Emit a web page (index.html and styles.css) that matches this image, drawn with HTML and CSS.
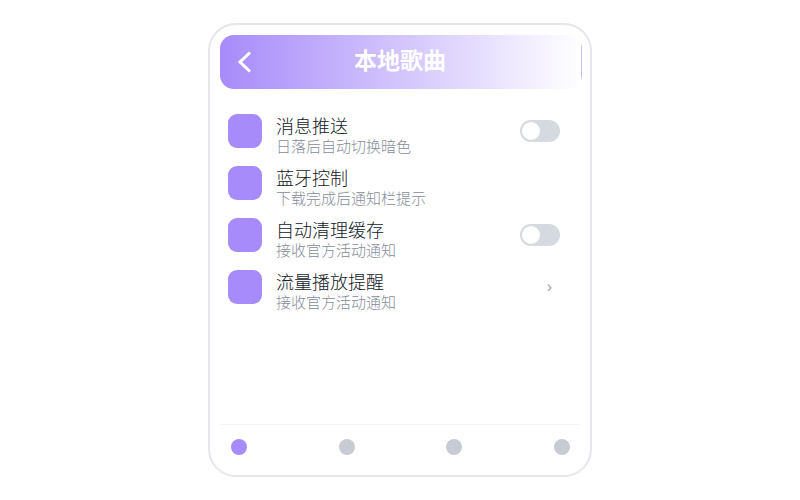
FILE: index.html
```html
<!DOCTYPE html>
<html lang="zh-CN">
  <head>
    <meta charset="utf-8" />
    <title>本地歌曲</title>
    <link rel="stylesheet" href="styles.css">
  </head>
  <body>
    <main class="phone">
      <header class="header">
        <button class="back" type="button" aria-label="返回">
          <svg viewBox="0 0 24 24" width="24" height="24">
            <path d="M18 2.5 L8 12 L18 21.5" />
          </svg>
        </button>
        <h1 class="title">本地歌曲</h1>
      </header>

      <ul class="list">
        <li class="item">
          <span class="icon"></span>
          <label class="text" for="push">
            <span class="name">消息推送</span>
            <span class="desc">日落后自动切换暗色</span>
          </label>
          <input class="switch" type="checkbox" id="push" />
        </li>
        <li class="item">
          <span class="icon"></span>
          <div class="text">
            <span class="name">蓝牙控制</span>
            <span class="desc">下载完成后通知栏提示</span>
          </div>
        </li>
        <li class="item">
          <span class="icon"></span>
          <label class="text" for="cache">
            <span class="name">自动清理缓存</span>
            <span class="desc">接收官方活动通知</span>
          </label>
          <input class="switch" type="checkbox" id="cache" />
        </li>
        <li class="item">
          <span class="icon"></span>
          <div class="text">
            <span class="name">流量播放提醒</span>
            <span class="desc">接收官方活动通知</span>
          </div>
          <a class="more" href="#" aria-label="流量播放提醒">›</a>
        </li>
      </ul>

      <nav class="tabs">
        <a class="tab active" href="#" aria-label="首页"></a>
        <a class="tab" href="#" aria-label="发现"></a>
        <a class="tab" href="#" aria-label="收藏"></a>
        <a class="tab" href="#" aria-label="我的"></a>
      </nav>
    </main>
  </body>
</html>
```

FILE: styles.css
```css
* {
  box-sizing: border-box;
}
body {
  margin: 0;
  min-height: 100vh;
  padding: 23px 16px;
  display: flex;
  justify-content: center;
  background: #fff;
  font-family: "Liberation Sans", "Noto Sans CJK SC", sans-serif;
}
.phone {
  width: 100%;
  max-width: 384px;
  display: flex;
  flex-direction: column;
  padding: 10px 8px 10px 10px;
  border: 2px solid #e5e7eb;
  border-radius: 28px;
}
.header {
  display: grid;
  grid-template-columns: 48px 1fr 50px;
  align-items: center;
  height: 54px;
  border-radius: 14px;
  /* thin line at the right end, then the fade */
  background:
    linear-gradient(#cbbcfc, #cbbcfc) right / 1px 100% no-repeat,
    linear-gradient(90deg, #a78bfa, #fff);
}
.back {
  display: flex;
  justify-content: center;
  padding: 0;
  border: 0;
  background: none;
  cursor: pointer;
}
.back svg {
  fill: none;
  stroke: #fff;
  stroke-width: 3;
}
.title {
  margin: 0;
  padding-bottom: 6px;
  font-size: 23px;
  text-align: center;
  color: #fff;
}
.list {
  flex: 1;
  margin: 0;
  padding: 16px 22px 0 8px;
  list-style: none;
}
.item {
  display: flex;
  align-items: center;
  height: 52px;
}
.icon {
  width: 34px;
  height: 34px;
  margin-right: 14px;
  border-radius: 9px;
  background: #a78bfa;
}
.text {
  flex: 1;
  padding-top: 11px;
}
.name,
.desc {
  display: block;
  font-weight: 300;
}
.name {
  font-size: 18px;
  line-height: 20px;
  color: #111827;
}
.desc {
  font-size: 15px;
  line-height: 19px;
  color: #858d9a;
}
.switch {
  appearance: none;
  display: flex;
  width: 40px;
  height: 22px;
  margin: 0;
  padding: 2px;
  border-radius: 11px;
  background: #d5d9e0;
  cursor: pointer;
}
.switch::before {
  content: "";
  width: 18px;
  height: 18px;
  border-radius: 50%;
  background: #fff;
}
.switch:checked {
  justify-content: flex-end;
  background: #a78bfa;
}
.more {
  padding: 0 8px;
  font-size: 16px;
  color: #9ca3af;
  text-decoration: none;
}
.tabs {
  display: flex;
  justify-content: space-between;
  align-items: center;
  height: 41px;
  margin-right: 2px;
  padding: 3px 10px 0 11px;
  border-top: 1px solid #f3f4f6;
}
.tab {
  width: 16px;
  height: 16px;
  border-radius: 50%;
  background: #c7cbd3;
}
.tab.active {
  background: #a78bfa;
}
```
